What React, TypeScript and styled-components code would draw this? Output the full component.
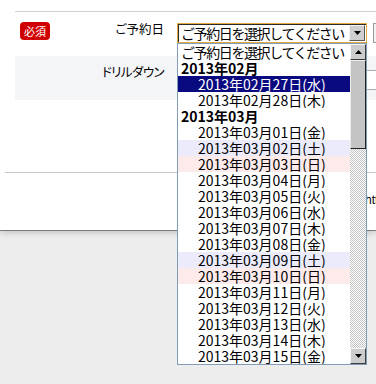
import React from 'react';
import styled, { createGlobalStyle } from 'styled-components';

const GlobalStyle = createGlobalStyle`
  html, body { margin: 0; padding: 0; overflow: hidden; }
  body {
    background: #ededed;
    width: 376px;
    height: 384px;
    font-family: "Noto Sans CJK JP", "Noto Sans", sans-serif;
    color: #000;
  }
`;

const Panel = styled.div`
  position: relative;
  box-sizing: border-box;
  height: 230px;
  padding-top: 11px;
  background: #fff;
  box-shadow: 0 1px 0 #7c7c7c, 0 2px 7px rgba(0, 0, 0, 0.22);
`;

const FormTable = styled.div`
  margin-left: 15px;
  border-top: 1px solid #d2d2d2;
`;

const Row = styled.div<{ $bg?: string }>`
  display: grid;
  grid-template-columns: 149px minmax(0, 1fr);
  column-gap: 13px;
  height: 44px;
  background: ${(p) => p.$bg || '#fff'};
`;

const HeadCell = styled.div<{ $top: number }>`
  display: flex;
  justify-content: space-between;
  align-items: flex-start;
  padding: ${(p) => p.$top}px 0 0 5px;
`;

const Badge = styled.span`
  display: flex;
  align-items: center;
  justify-content: center;
  width: 30px;
  height: 18px;
  border-radius: 4px;
  background: #d00000;
  color: #fff;
  font-size: 11px;
  line-height: 18px;
`;

const Label = styled.span<{ $ls?: number }>`
  margin-left: auto;
  font-size: 12.5px;
  line-height: 14px;
  font-feature-settings: "palt";
  letter-spacing: ${(p) => p.$ls ?? 0}px;
  white-space: nowrap;
`;

const FieldCell = styled.div<{ $top: number }>`
  display: flex;
  align-items: flex-start;
  padding-top: ${(p) => p.$top}px;
`;

const SelectWrap = styled.div`
  position: relative;
  flex-shrink: 0;
  display: flex;
  align-items: center;
  box-sizing: border-box;
  width: 190px;
  height: 20px;
  border: 1px solid #e2a93f;
  background: #fff;
  box-shadow: inset 1px 1px 0 #2a2a2a;
`;

const SelectText = styled.span`
  flex: 1;
  padding-left: 3px;
  font-size: 14px;
  line-height: 18px;
  letter-spacing: -1.4px;
  white-space: nowrap;
  overflow: hidden;
`;

const ArrowBtn = styled.span`
  display: flex;
  align-items: center;
  justify-content: center;
  box-sizing: border-box;
  width: 16px;
  height: 16px;
  margin-right: 1px;
  background: #cfcfcf;
  border-top: 1px solid #f4f4f4;
  border-left: 1px solid #f4f4f4;
  border-right: 1px solid #5a5a5a;
  border-bottom: 1px solid #5a5a5a;
  flex-shrink: 0;
`;

const SideBtn = styled.span`
  flex-shrink: 0;
  margin-left: 6px;
  width: 40px;
  height: 20px;
  box-sizing: border-box;
  border: 1px solid #9c9c9c;
  background: #f2f2f2;
`;

const PlainBox = styled.span`
  flex-shrink: 0;
  width: 220px;
  height: 20px;
  box-sizing: border-box;
  border: 1px solid #a7adb5;
  background: #fff;
`;

const DropList = styled.div`
  position: absolute;
  top: 19px;
  left: -1px;
  z-index: 10;
  display: flex;
  box-sizing: border-box;
  width: 190px;
  height: 322px;
  border: 1px solid #7f9db9;
  background: #fff;
`;

const Options = styled.div`
  flex: 1;
  min-width: 0;
  overflow: hidden;
`;

type Kind = 'placeholder' | 'group' | 'selected' | 'sat' | 'sun' | 'day';

const bgFor: Record<Kind, string> = {
  placeholder: '#fff',
  group: '#fff',
  selected: '#0a0a80',
  sat: '#ebebfc',
  sun: '#fdeaea',
  day: '#fff',
};

const Option = styled.div<{ $kind: Kind }>`
  height: 16px;
  line-height: 16px;
  font-size: 14px;
  white-space: nowrap;
  overflow: hidden;
  padding-left: ${(p) => (p.$kind === 'placeholder' || p.$kind === 'group' ? 3 : 20)}px;
  font-weight: ${(p) => (p.$kind === 'group' ? 700 : 400)};
  letter-spacing: ${(p) => (p.$kind === 'placeholder' ? '-1.4px' : 'normal')};
  background: ${(p) => bgFor[p.$kind]};
  color: ${(p) => (p.$kind === 'selected' ? '#fff' : '#000')};
`;

const Scrollbar = styled.div`
  display: flex;
  flex-direction: column;
  width: 16px;
  flex-shrink: 0;
`;

const ScrollBtn = styled.div`
  display: flex;
  align-items: center;
  justify-content: center;
  box-sizing: border-box;
  height: 16px;
  background: #cccccc;
  border-top: 1px solid #f6f6f6;
  border-left: 1px solid #f6f6f6;
  border-right: 1px solid #3c3c3c;
  border-bottom: 1px solid #3c3c3c;
`;

const Thumb = styled.div`
  box-sizing: border-box;
  height: 89px;
  background: #c4c4c4;
  border-top: 1px solid #ececec;
  border-left: 1px solid #ececec;
  border-right: 1px solid #222;
  border-bottom: 1px solid #222;
`;

const Track = styled.div`
  flex: 1;
  background-color: #fff;
  background-image: repeating-conic-gradient(#c3c3c3 0 25%, #ffffff 0 50%);
  background-size: 2px 2px;
`;

const Divider = styled.div`
  margin: 72px 0 0 5px;
  border-top: 1px solid #c8c8c8;
`;

const NoteRow = styled.div`
  padding: 20px 0 0 365px;
  font-family: "Liberation Sans", Arial, sans-serif;
  font-size: 12px;
  line-height: 14px;
  white-space: nowrap;
  overflow: hidden;
`;

const Tri = ({ up }: { up?: boolean }) => (
  <svg width="7" height="4" viewBox="0 0 7 4">
    <polygon points={up ? '0,4 7,4 3.5,0' : '0,0 7,0 3.5,4'} fill="#000" />
  </svg>
);

const weekdays = ['日', '月', '火', '水', '木', '金', '土'];

type Item = { kind: Kind; text: string };

const items: Item[] = [
  { kind: 'placeholder', text: 'ご予約日を選択してください' },
  { kind: 'group', text: '2013年02月' },
  { kind: 'selected', text: '2013年02月27日(水)' },
  { kind: 'day', text: '2013年02月28日(木)' },
  { kind: 'group', text: '2013年03月' },
];

for (let d = 1; d <= 15; d++) {
  const wd = (d + 4) % 7; // 2013-03-01 is Friday
  const kind: Kind = wd === 6 ? 'sat' : wd === 0 ? 'sun' : 'day';
  items.push({
    kind,
    text: `2013年03月${String(d).padStart(2, '0')}日(${weekdays[wd]})`,
  });
}

export default function App() {
  return (
    <>
      <GlobalStyle />
      <Panel>
        <FormTable>
          <Row>
            <HeadCell $top={10}>
              <Badge>必須</Badge>
              <Label>ご予約日</Label>
            </HeadCell>
            <FieldCell $top={11}>
              <SelectWrap>
                <SelectText>ご予約日を選択してください</SelectText>
                <ArrowBtn>
                  <Tri />
                </ArrowBtn>
                <DropList>
                  <Options>
                    {items.map((it, i) => (
                      <Option key={i} $kind={it.kind}>
                        {it.text}
                      </Option>
                    ))}
                  </Options>
                  <Scrollbar>
                    <ScrollBtn>
                      <Tri up />
                    </ScrollBtn>
                    <Thumb />
                    <Track />
                    <ScrollBtn>
                      <Tri />
                    </ScrollBtn>
                  </Scrollbar>
                </DropList>
              </SelectWrap>
              <SideBtn />
            </FieldCell>
          </Row>
          <Row $bg="#f4f5f7">
            <HeadCell $top={9}>
              <Label $ls={-0.6}>ドリルダウン</Label>
            </HeadCell>
            <FieldCell $top={14}>
              <PlainBox />
            </FieldCell>
          </Row>
        </FormTable>
        <Divider />
        <NoteRow>http://</NoteRow>
      </Panel>
    </>
  );
}
